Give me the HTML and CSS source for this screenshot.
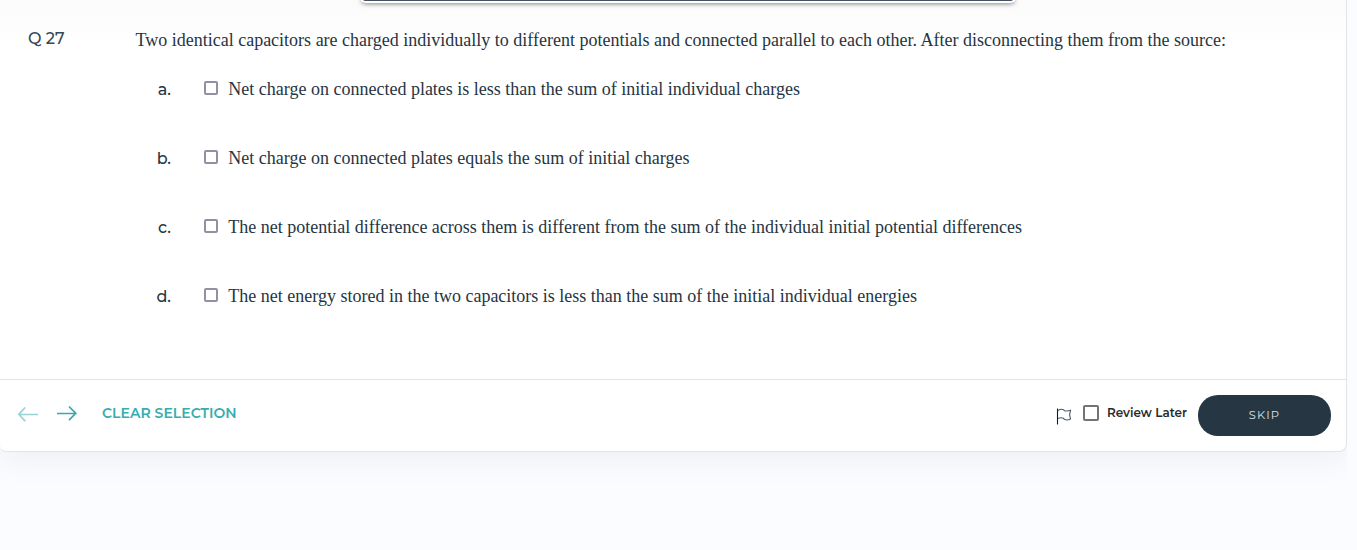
FILE: index.html
```html
<!DOCTYPE html>
<html lang="en">
<head>
<meta charset="utf-8">
<title>Question 27</title>
<link rel="stylesheet" href="styles.css">
</head>
<body>
<main class="viewport">
  <section class="card">
    <div class="question-area">
      <div class="media-frame"></div>
      <div class="question">
        <div class="number">Q 27</div>
        <div class="question-text">Two identical capacitors are charged individually to different potentials and connected parallel to each other. After disconnecting them from the source:</div>
      </div>
      <div class="options">
        <label class="option"><span class="letter">a.</span><input class="box" type="checkbox"><span class="option-text">Net charge on connected plates is less than the sum of initial individual charges</span></label>
        <label class="option"><span class="letter">b.</span><input class="box" type="checkbox"><span class="option-text">Net charge on connected plates equals the sum of initial charges</span></label>
        <label class="option"><span class="letter">c.</span><input class="box" type="checkbox"><span class="option-text">The net potential difference across them is different from the sum of the individual initial potential differences</span></label>
        <label class="option"><span class="letter">d.</span><input class="box" type="checkbox"><span class="option-text">The net energy stored in the two capacitors is less than the sum of the initial individual energies</span></label>
      </div>
    </div>
    <footer class="footer">
      <svg class="arrow arrow-prev" viewBox="0 0 22 16"><path d="M21 8.5H1.5M8.2 1.5L1.8 8.3L8.2 15.2"/></svg>
      <svg class="arrow arrow-next" viewBox="0 0 22 16"><path d="M1 8.5H20.5M13 1.5L19.8 8.3L13 15.2"/></svg>
      <span class="clear">CLEAR SELECTION</span>
      <svg class="flag" viewBox="0 0 16 17"><path class="pole" d="M1.5 .5V16.5"/><path d="M2 2.5C3.8 1.2 6.2 1.2 7.5 1.7L8.5 2.7C10.4 3.3 12.4 3.1 14.5 2.3L13.6 6.8L14.5 11C12.2 12.2 9.6 12 8.3 11.3L7.5 10.3C6 9.7 3.8 9.7 2 10.5"/></svg>
      <input class="review-box" type="checkbox">
      <span class="review">Review Later</span>
      <button class="skip">SKIP</button>
    </footer>
  </section>
</main>
</body>
</html>
```
FILE: styles.css
```css
* { box-sizing: border-box; }
body { margin: 0; background: #fbfcff; font-family: Montserrat, Inter, sans-serif; color: #263542; overflow: hidden; }
.viewport { width: 1347px; height: 550px; overflow: hidden; }
.card { height: 452px; background: #fff; border: solid #e2e4e6; border-width: 0 1px 1px 0; border-radius: 0 0 8px 6px; box-shadow: 0 10px 30px rgba(40, 45, 65, .055); }
.question-area { height: 379px; background: linear-gradient(#fbfbfb, #fff 48px); }
.media-frame { width: 654px; height: 3px; margin-left: 361px; background: #435160; border: solid #fff; border-width: 0 2px 2px; border-radius: 0 0 6px 6px / 0 0 3px 3px; box-shadow: 0 0 5px rgba(0, 0, 0, .8); }
.question { display: flex; height: 72px; padding-top: 24px; }
.number { width: 135.4px; padding-left: 28px; font-size: 16px; font-weight: 500; line-height: 24px; color: #35495a; }
.question-text, .option-text { font-family: "Liberation Serif", serif; font-size: 18px; line-height: 26px; white-space: nowrap; }
.question-text { letter-spacing: .003px; }
.option { display: flex; align-items: flex-start; height: 69px; }
.option-text { padding-top: 1px; }
.letter { width: 171px; text-align: right; font-size: 16px; font-weight: 500; line-height: 30px; }
.box, .review-box { appearance: none; flex: none; margin: 0; border: 2px solid #9490a1; border-radius: 2px; background: #fff; }
.box { width: 14px; height: 14px; margin: 6px 10.3px 0 33px; }
.footer { display: flex; align-items: flex-start; height: 72px; border-top: 1px solid #e0e2e3; }
.arrow { width: 22px; height: 16px; fill: none; stroke: #39a9ab; stroke-width: 1.7; }
.arrow-prev { margin: 26px 0 0 17px; opacity: .5; }
.arrow-next { margin: 25px 0 0 17px; }
.clear { width: 135px; margin: 22px 0 0 24px; font-size: 14px; font-weight: 600; line-height: 22px; letter-spacing: .03px; color: #36adae; white-space: nowrap; }
.flag { width: 16px; height: 17px; margin: 28px 0 0 auto; fill: none; stroke: #4b5966; stroke-width: 1.1; }
.pole { stroke: #111b24; }
.review-box { width: 16px; height: 16px; margin: 25px 8px 0 11px; border-color: #747474; }
.review { width: 80px; margin-top: 23px; font-size: 12px; font-weight: 600; line-height: 20px; color: #2a2a2a; white-space: nowrap; }
.skip { width: 133px; height: 41px; margin: 15px 15px 0 11px; padding: 0; border: 0; border-radius: 20px; background: #263643; color: #dce0e3; font: 400 11.5px/41px Montserrat, Inter, sans-serif; letter-spacing: 1.1px; }
```
